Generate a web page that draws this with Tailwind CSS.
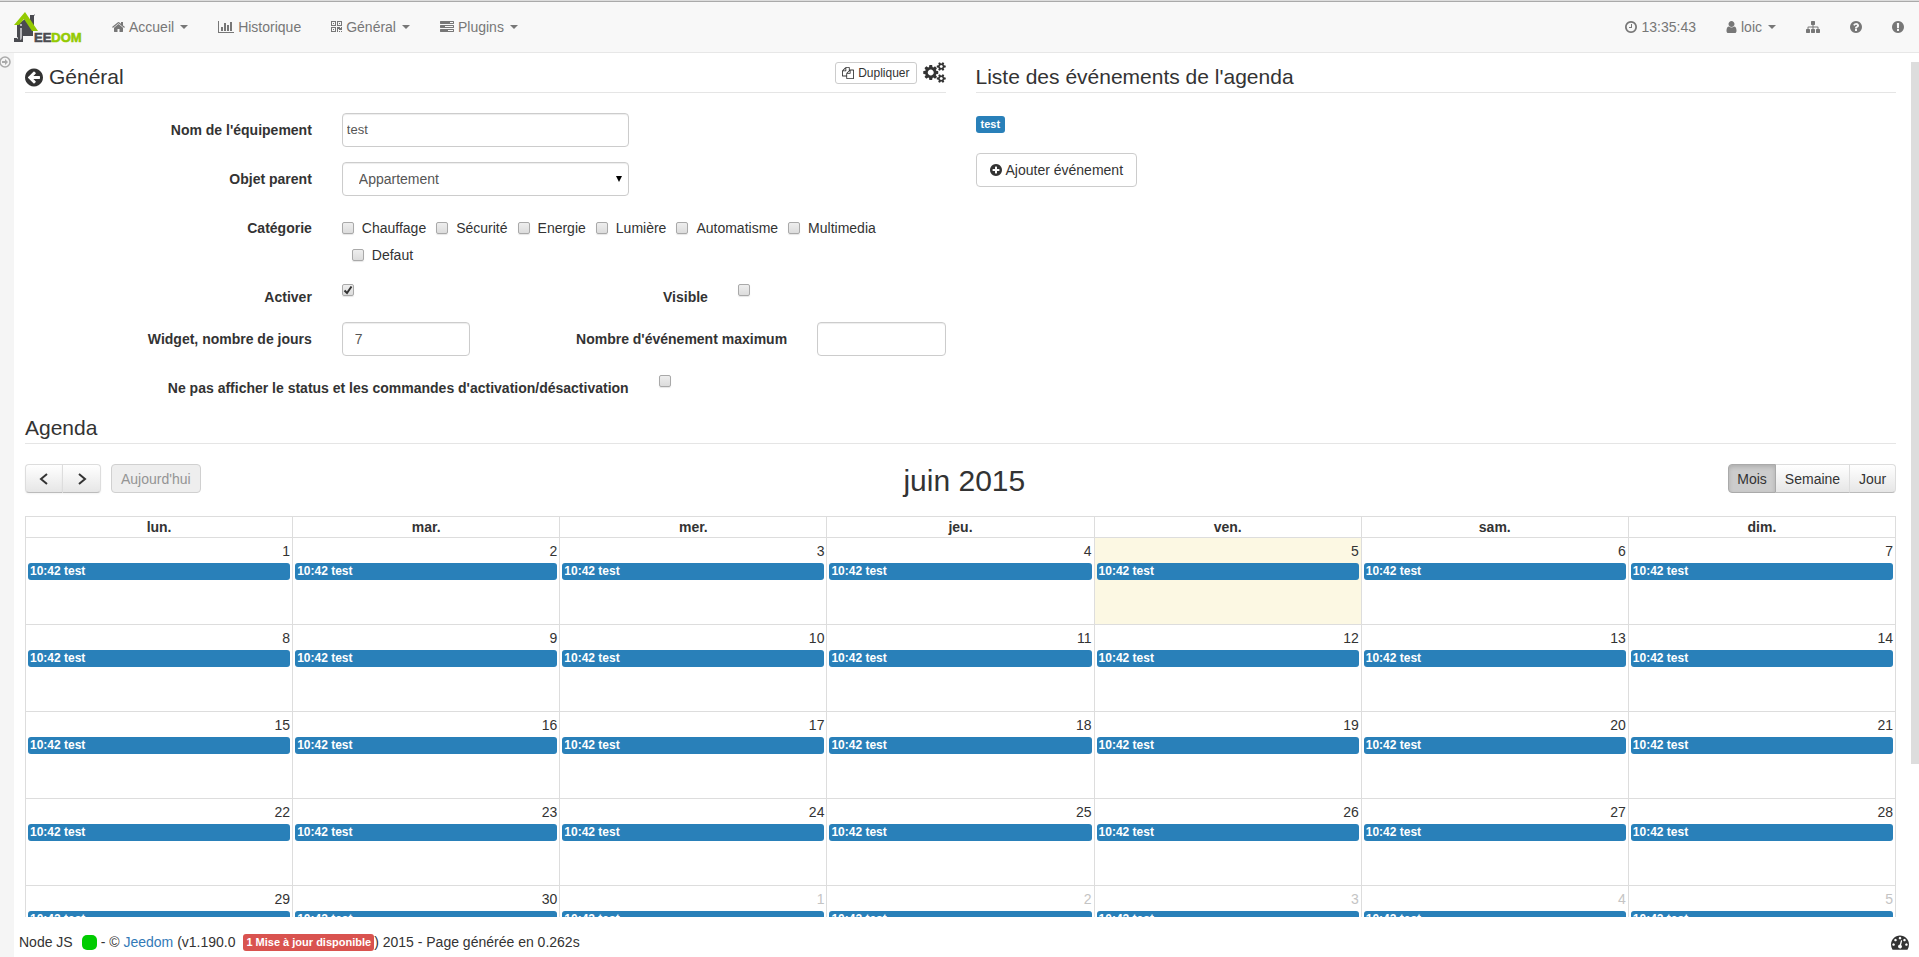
<!DOCTYPE html>
<html lang="fr">
<head>
<meta charset="utf-8">
<title>Jeedom - Agenda</title>
<script src="https://cdn.jsdelivr.net/npm/@tailwindcss/browser@4"></script>
</head>
<body class="h-screen overflow-hidden flex flex-col bg-white text-sm leading-5 text-[#333] font-['Liberation_Sans',Arial,sans-serif]">

<!-- Shared icon shapes -->
<svg class="hidden" aria-hidden="true">
  <symbol id="caret" viewBox="0 0 8 4"><path d="M0 0h8L4 4z"/></symbol>
  <symbol id="home" viewBox="64 0 1664 1792"><path d="M1472 992v480q0 26-19 45t-45 19h-384v-384h-256v384h-384q-26 0-45-19t-19-45v-480q0-1 .5-3t.5-3l575-474 575 474q1 2 1 6zm223-69l-62 74q-8 9-21 11h-3q-13 0-21-7l-692-577-692 577q-12 8-24 7-13-2-21-11l-62-74q-8-10-7-23.5t11-21.5l719-599q32-26 76-26t76 26l244 204v-195q0-14 9-23t23-9h192q14 0 23 9t9 23v408l219 182q10 8 11 21.5t-7 23.5z"/></symbol>
  <symbol id="chart" viewBox="0 0 2048 1792"><path d="M640 896v512h-256v-512h256zm384-512v1024h-256v-1024h256zm1024 1152v128h-2048v-1536h128v1408h1920zm-640-896v768h-256v-768h256zm384-384v1152h-256v-1152h256z"/></symbol>
  <symbol id="qrcode" viewBox="192 0 1408 1792"><path d="M576 1152v128h-128v-128h128zm0-768v128h-128v-128h128zm768 0v128h-128v-128h128zm-1024 1023h384v-383h-384v383zm0-767h384v-384h-384v384zm768 0h384v-384h-384v384zm-256 256v640h-640v-640h640zm512 512v128h-128v-128h128zm256 0v128h-128v-128h128zm0-512v384h-384v-128h-128v384h-128v-640h384v128h128v-128h128zm-768-768v640h-640v-640h640zm768 0v640h-640v-640h640z"/></symbol>
  <symbol id="tasks" viewBox="0 0 1792 1792"><path d="M1024 1408h640v-128h-640v128zm-384-512h1024v-128h-1024v128zm640-512h384v-128h-384v128zm512 832v256q0 26-19 45t-45 19h-1664q-26 0-45-19t-19-45v-256q0-26 19-45t45-19h1664q26 0 45 19t19 45zm0-512v256q0 26-19 45t-45 19h-1664q-26 0-45-19t-19-45v-256q0-26 19-45t45-19h1664q26 0 45 19t19 45zm0-512v256q0 26-19 45t-45 19h-1664q-26 0-45-19t-19-45v-256q0-26 19-45t45-19h1664q26 0 45 19t19 45z"/></symbol>
  <symbol id="clock" viewBox="128 0 1536 1792"><path d="M1024 544v448q0 14-9 23t-23 9h-320q-14 0-23-9t-9-23v-64q0-14 9-23t23-9h224v-352q0-14 9-23t23-9h64q14 0 23 9t9 23zm416 352q0-148-73-273t-198-198-273-73-273 73-198 198-73 273 73 273 198 198 273 73 273-73 198-198 73-273zm224 0q0 209-103 385.5t-279.5 279.5-385.5 103-385.5-103-279.5-279.5-103-385.5 103-385.5 279.5-279.5 385.5-103 385.5 103 279.5 279.5 103 385.5z"/></symbol>
  <symbol id="user" viewBox="256 0 1280 1792"><path d="M1536 1399q0 109-62.5 187t-150.5 78h-854q-88 0-150.5-78t-62.5-187q0-85 8.5-160.5t31.5-152 58.5-131 94-89 134.5-34.5q131 128 313 128t313-128q76 0 134.5 34.5t94 89 58.5 131 31.5 152 8.5 160.5zm-256-887q0 159-112.5 271.5t-271.5 112.5-271.5-112.5-112.5-271.5 112.5-271.5 271.5-112.5 271.5 112.5 112.5 271.5z"/></symbol>
  <symbol id="sitemap" viewBox="0 0 1792 1792"><path d="M1792 1248v320q0 40-28 68t-68 28h-320q-40 0-68-28t-28-68v-320q0-40 28-68t68-28h96v-192h-512v192h96q40 0 68 28t28 68v320q0 40-28 68t-68 28h-320q-40 0-68-28t-28-68v-320q0-40 28-68t68-28h96v-192h-512v192h96q40 0 68 28t28 68v320q0 40-28 68t-68 28h-320q-40 0-68-28t-28-68v-320q0-40 28-68t68-28h96v-192q0-52 38-90t90-38h512v-192h-96q-40 0-68-28t-28-68v-320q0-40 28-68t68-28h320q40 0 68 28t28 68v320q0 40-28 68t-68 28h-96v192h512q52 0 90 38t38 90v192h96q40 0 68 28t28 68z"/></symbol>
  <symbol id="question" viewBox="128 0 1536 1792"><path d="M1024 1376v-192q0-14-9-23t-23-9h-192q-14 0-23 9t-9 23v192q0 14 9 23t23 9h192q14 0 23-9t9-23zm256-672q0-88-55.5-163t-138.5-116-170-41q-243 0-371 213-15 24 8 42l132 100q7 6 19 6 16 0 25-12 53-68 86-92 34-24 86-24 48 0 85.5 26t37.5 59q0 38-20 61t-68 45q-63 28-115.5 86.5t-52.5 125.5v36q0 14 9 23t23 9h192q14 0 23-9t9-23q0-19 21.5-49.5t54.5-49.5q32-18 49-28.5t46-35 44.5-48 28-60.5 12.5-81zm384 192q0 209-103 385.5t-279.5 279.5-385.5 103-385.5-103-279.5-279.5-103-385.5 103-385.5 279.5-279.5 385.5-103 385.5 103 279.5 279.5 103 385.5z"/></symbol>
  <symbol id="exclamation" viewBox="128 0 1536 1792"><path d="M896 128q209 0 385.5 103t279.5 279.5 103 385.5-103 385.5-279.5 279.5-385.5 103-385.5-103-279.5-279.5-103-385.5 103-385.5 279.5-279.5 385.5-103zm128 1247v-190q0-14-9-23.5t-22-9.5h-192q-13 0-23 10t-10 23v190q0 13 10 23t23 10h192q13 0 22-9.5t9-23.5zm-2-344l18-621q0-12-10-18-10-8-24-8h-220q-14 0-24 8-10 6-10 18l17 621q0 10 10 17.5t24 7.5h185q14 0 23.5-7.5t10.5-17.5z"/></symbol>
  <symbol id="back" viewBox="128 0 1536 1792"><path d="M1408 960v-128q0-26-19-45t-45-19h-502l189-189q19-19 19-45t-19-45l-91-91q-18-18-45-18t-45 18l-362 362-91 91q-18 18-18 45t18 45l91 91 362 362q18 18 45 18t45-18l91-91q18-18 18-45t-18-45l-189-189h502q26 0 45-19t19-45zm256-64q0 209-103 385.5t-279.5 279.5-385.5 103-385.5-103-279.5-279.5-103-385.5 103-385.5 279.5-279.5 385.5-103 385.5 103 279.5 279.5 103 385.5z"/></symbol>
  <symbol id="plus" viewBox="128 0 1536 1792"><path d="M1344 960v-128q0-26-19-45t-45-19h-256v-256q0-26-19-45t-45-19h-128q-26 0-45 19t-19 45v256h-256q-26 0-45 19t-19 45v128q0 26 19 45t45 19h256v256q0 26 19 45t45 19h128q26 0 45-19t19-45v-256h256q26 0 45-19t19-45zm320-64q0 209-103 385.5t-279.5 279.5-385.5 103-385.5-103-279.5-279.5-103-385.5 103-385.5 279.5-279.5 385.5-103 385.5 103 279.5 279.5 103 385.5z"/></symbol>
  <symbol id="files" viewBox="0 0 1792 1792"><path d="M1696 384q40 0 68 28t28 68v1216q0 40-28 68t-68 28h-960q-40 0-68-28t-28-68v-288h-544q-40 0-68-28t-28-68v-672q0-40 20-88t48-76l408-408q28-28 76-48t88-20h416q40 0 68 28t28 68v328q68-40 128-40h416zm-544 213l-299 299h299v-299zm-640-384l-299 299h299v-299zm196 647l316-316v-416h-384v416q0 40-28 68t-68 28h-416v640h512v-256q0-40 20-88t48-76zm956 804v-1152h-384v416q0 40-28 68t-68 28h-416v640h896z"/></symbol>
  <symbol id="cogs" viewBox="0 0 1920 1792"><path d="M896 896q0-106-75-181t-181-75-181 75-75 181 75 181 181 75 181-75 75-181zm768 512q0-52-38-90t-90-38-90 38-38 90q0 53 37.5 90.5t90.5 37.5 90.5-37.5 37.5-90.5zm0-1024q0-52-38-90t-90-38-90 38-38 90q0 53 37.5 90.5t90.5 37.5 90.5-37.5 37.5-90.5zm-384 421v185q0 10-7 19.5t-16 10.5l-155 24q-11 35-32 76 34 48 90 115 7 11 7 20 0 12-7 19-23 30-82.5 89.5t-78.5 59.5q-11 0-21-7l-115-90q-37 19-77 31-11 108-23 155-7 24-30 24h-186q-11 0-20-7.5t-10-17.5l-23-153q-34-10-75-31l-118 89q-7 7-20 7-11 0-21-8-144-133-144-160 0-9 7-19 10-14 41-53t47-61q-23-44-35-82l-152-24q-10-1-17-9.5t-7-19.5v-185q0-10 7-19.5t16-10.5l155-24q11-35 32-76-34-48-90-115-7-11-7-20 0-12 7-20 22-30 82-89t79-59q11 0 21 7l115 90q34-18 77-32 11-108 23-154 7-24 30-24h186q11 0 20 7.5t10 17.5l23 153q34 10 75 31l118-89q8-7 20-7 11 0 21 8 144 133 144 160 0 8-7 19-12 16-42 54t-45 60q23 48 34 82l152 23q10 2 17 10.5t7 19.5zm640 533v140q0 16-149 31-12 27-30 52 51 113 51 138 0 4-4 7-122 71-124 71-8 0-46-47t-52-68q-20 2-30 2t-30-2q-14 21-52 68t-46 47q-2 0-124-71-4-3-4-7 0-25 51-138-18-25-30-52-149-15-149-31v-140q0-16 149-31 13-29 30-52-51-113-51-138 0-4 4-7 4-2 35-20t59-34 30-16q8 0 46 46.5t52 67.5q20-2 30-2t30 2q51-71 92-112l6-2q4 0 124 70 4 3 4 7 0 25-51 138 17 23 30 52 149 15 149 31zm0-1024v140q0 16-149 31-12 27-30 52 51 113 51 138 0 4-4 7-122 71-124 71-8 0-46-47t-52-68q-20 2-30 2t-30-2q-14 21-52 68t-46 47q-2 0-124-71-4-3-4-7 0-25 51-138-18-25-30-52-149-15-149-31v-140q0-16 149-31 13-29 30-52-51-113-51-138 0-4 4-7 4-2 35-20t59-34 30-16q8 0 46 46.5t52 67.5q20-2 30-2t30 2q51-71 92-112l6-2q4 0 124 70 4 3 4 7 0 25-51 138 17 23 30 52 149 15 149 31z"/></symbol>
  <symbol id="gauge" viewBox="0 0 1792 1792"><path d="M384 1152q0-53-37.5-90.5t-90.5-37.5-90.5 37.5-37.5 90.5 37.5 90.5 90.5 37.5 90.5-37.5 37.5-90.5zm192-448q0-53-37.5-90.5t-90.5-37.5-90.5 37.5-37.5 90.5 37.5 90.5 90.5 37.5 90.5-37.5 37.5-90.5zm428 481l101-382q6-26-7.5-48.5t-38.5-29.5-48 6.5-30 39.5l-101 382q-60 5-107 43.5t-63 98.5q-20 77 20 146t117 89 146-20 89-117q16-60-6-117t-72-91zm660-33q0-53-37.5-90.5t-90.5-37.5-90.5 37.5-37.5 90.5 37.5 90.5 90.5 37.5 90.5-37.5 37.5-90.5zm-640-640q0-53-37.5-90.5t-90.5-37.5-90.5 37.5-37.5 90.5 37.5 90.5 90.5 37.5 90.5-37.5 37.5-90.5zm448 192q0-53-37.5-90.5t-90.5-37.5-90.5 37.5-37.5 90.5 37.5 90.5 90.5 37.5 90.5-37.5 37.5-90.5zm320 448q0 261-141 483-19 29-54 29h-1402q-35 0-54-29-141-221-141-483 0-182 71-348t191-286 286-191 348-71 348 71 286 191 191 286 71 348z"/></symbol>
</svg>

<header class="shrink-0 border-t border-[#ddd]">
  <nav class="flex h-[52px] items-center border-t border-b border-t-[#aaa] border-b-[#e7e7e7] bg-[#f8f8f8] text-[#777]">
    <a href="#" class="ml-[13px] mr-[14px]" aria-label="Jeedom">
      <svg class="h-[34px] w-[70px]" viewBox="0 0 70 34">
        <path d="M17 5h4v12l-4-6z" fill="#4a4b50"/>
        <path d="M21 4h1v2h-1z" fill="#b5b5b8"/>
        <path d="M4 15l8-6 8 11v6H10v6H1v-4h3z" fill="#4a4b50"/>
        <path d="M4 27h1v2H4zM7 14h2v2H7zM7 18h2v9q0 3-2 3z" fill="#b5b5b8"/>
        <path d="M1 15L12 2l13 19h-6L11 9l-5 6z" fill="#94ca02"/>
        <text x="21" y="32" font-family="Liberation Sans, Arial, sans-serif" font-size="13" font-weight="700" fill="#4a4b50" stroke="#4a4b50" stroke-width=".6">EE<tspan fill="#94ca02" stroke="#94ca02">DOM</tspan></text>
      </svg>
    </a>
    <a href="#" class="flex items-center px-[15px]"><svg class="mr-1 h-[14px] w-[13px] fill-current"><use href="#home"/></svg>Accueil<svg class="ml-[6px] h-1 w-2 fill-current"><use href="#caret"/></svg></a>
    <a href="#" class="flex items-center px-[15px]"><svg class="mr-1 h-[14px] w-4 fill-current"><use href="#chart"/></svg>Historique</a>
    <a href="#" class="flex items-center px-[15px]"><svg class="mr-1 h-[14px] w-[11px] fill-current"><use href="#qrcode"/></svg>Général<svg class="ml-[6px] h-1 w-2 fill-current"><use href="#caret"/></svg></a>
    <a href="#" class="flex items-center px-[15px]"><svg class="mr-1 h-[14px] w-[14px] fill-current"><use href="#tasks"/></svg>Plugins<svg class="ml-[6px] h-1 w-2 fill-current"><use href="#caret"/></svg></a>
    <span class="ml-auto flex items-center px-[15px]"><svg class="mr-1 h-[14px] w-3 fill-current"><use href="#clock"/></svg>13:35:43</span>
    <a href="#" class="flex items-center px-[15px]"><svg class="mr-1 h-[14px] w-[11px] fill-current"><use href="#user"/></svg>loic<svg class="ml-[6px] h-1 w-2 fill-current"><use href="#caret"/></svg></a>
    <a href="#" class="px-[15px]" aria-label="Plan"><svg class="h-[14px] w-[14px] fill-current"><use href="#sitemap"/></svg></a>
    <a href="#" class="px-[15px]" aria-label="Aide"><svg class="h-[14px] w-3 fill-current"><use href="#question"/></svg></a>
    <a href="#" class="px-[15px]" aria-label="Alerte"><svg class="h-[14px] w-3 fill-current"><use href="#exclamation"/></svg></a>
  </nav>
</header>

<div class="relative flex min-h-0 flex-1">
  <aside class="w-[14px] shrink-0 overflow-hidden bg-[#f5f5f5]">
    <button type="button" class="block pt-[3px]" aria-label="Ouvrir le menu">
      <svg class="h-3 w-[11px]" viewBox="1 0 11 12" fill="none" stroke="#aaa"><circle cx="6" cy="6" r="5" stroke-width="1.5"/><path d="M3 5h3V3l3 3-3 3V7H3z" fill="#aaa" stroke="none"/></svg>
    </button>
  </aside>

  <div class="flex min-w-0 flex-1 flex-col">
    <main class="min-h-0 flex-1 overflow-hidden pl-[11px] pr-[23px] pt-[9px]">
      <div class="flex gap-[30px]">
        <section class="min-w-0 flex-1">
          <div class="mb-5 flex h-[31px] items-start border-b border-[#e5e5e5]">
            <h1 class="flex items-center text-[21px] leading-[30px]"><svg class="mr-[6px] h-[21px] w-[18px] fill-current"><use href="#back"/></svg>Général</h1>
            <button type="button" class="ml-auto flex h-[22px] items-center rounded-[3px] border border-[#ccc] bg-white px-[6px] text-xs"><svg class="mr-1 h-3 w-3 fill-current"><use href="#files"/></svg>Dupliquer</button>
            <button type="button" class="ml-[6px]" aria-label="Configuration"><svg class="h-[21px] w-[23px] fill-current"><use href="#cogs"/></svg></button>
          </div>

          <form class="-mx-[15px] grid grid-cols-12 items-start gap-y-[15px]">
            <label for="nom" class="col-span-4 px-[15px] pt-[7px] text-right font-bold">Nom de l'équipement</label>
            <div class="col-span-4 px-[15px]"><input id="nom" type="text" value="test" class="h-[34px] w-full rounded border border-[#ccc] px-1 pb-[2px] text-[13px] text-[#555] shadow-[inset_0_1px_1px_rgba(0,0,0,0.075)]"></div>

            <label for="parent" class="col-span-4 col-start-1 px-[15px] pt-[7px] text-right font-bold">Objet parent</label>
            <div class="relative col-span-4 px-[15px]">
              <select id="parent" class="h-[34px] w-full appearance-none rounded border border-[#ccc] bg-white px-4 text-[#555] shadow-[inset_0_1px_1px_rgba(0,0,0,0.075)]"><option>Appartement</option></select>
              <svg class="pointer-events-none absolute right-[22px] top-[14px] h-[6px] w-[6px]" viewBox="0 0 6 6"><path d="M0 0h6L3 6z"/></svg>
            </div>

            <span id="cat" class="col-span-4 col-start-1 px-[15px] pt-[7px] text-right font-bold">Catégorie</span>
            <div role="group" aria-labelledby="cat" id="categories" class="col-span-8 flex flex-wrap pl-[15px] pr-[30px]"></div>

            <label for="activer" class="col-span-4 col-start-1 px-[15px] pt-[7px] text-right font-bold">Activer</label>
            <div class="col-span-1 pl-[15px] pt-1"><span class="grid h-3 w-3"><input id="activer" type="checkbox" checked class="peer col-start-1 row-start-1 h-3 w-3 appearance-none rounded-[2px] border border-[#a9a9a9] bg-linear-to-b from-[#eee] to-[#dcdcdc] shadow-[0_1px_1px_rgba(0,0,0,0.1)]"><svg class="pointer-events-none invisible col-start-1 row-start-1 h-3 w-3 peer-checked:visible" viewBox="0 0 12 12" fill="none" stroke="#333" stroke-width="2"><path d="M2.500 6.500l2.500 2.500 4.500-6.500"/></svg></span></div>
            <label for="visible" class="col-span-4 px-[15px] pt-[7px] text-right font-bold">Visible</label>
            <div class="col-span-3 pl-[15px] pt-1"><input id="visible" type="checkbox" class="block h-3 w-3 appearance-none rounded-[2px] border border-[#a9a9a9] bg-linear-to-b from-[#eee] to-[#dcdcdc] shadow-[0_1px_1px_rgba(0,0,0,0.1)]"></div>

            <label for="jours" class="col-span-4 px-[15px] pt-[7px] text-right font-bold">Widget, nombre de jours</label>
            <div class="col-span-2 px-[15px]"><input id="jours" type="text" value="7" class="h-[34px] w-full rounded border border-[#ccc] px-3 text-[#555] shadow-[inset_0_1px_1px_rgba(0,0,0,0.075)]"></div>
            <label for="max" class="col-span-4 px-[15px] pt-[7px] text-right font-bold">Nombre d'événement maximum</label>
            <div class="col-span-2 px-[15px]"><input id="max" type="text" class="h-[34px] w-full rounded border border-[#ccc] px-3 text-[#555] shadow-[inset_0_1px_1px_rgba(0,0,0,0.075)]"></div>

            <label for="status" class="col-span-8 px-[15px] pt-[7px] text-right font-bold">Ne pas afficher le status et les commandes d'activation/désactivation</label>
            <div class="col-span-4 pl-[15px] pt-1"><input id="status" type="checkbox" class="block h-3 w-3 appearance-none rounded-[2px] border border-[#a9a9a9] bg-linear-to-b from-[#eee] to-[#dcdcdc] shadow-[0_1px_1px_rgba(0,0,0,0.1)]"></div>
          </form>
        </section>

        <section class="min-w-0 flex-1">
          <h2 class="mb-[23px] border-b border-[#e5e5e5] text-[21px] leading-[30px]">Liste des événements de l'agenda</h2>
          <a href="#" class="block h-[17px] w-fit rounded-[3px] bg-[#2980b9] px-[5px] text-[11px] leading-4 font-bold text-white">test</a>
          <button type="button" class="mt-5 flex h-[34px] items-center rounded border border-[#ccc] bg-white px-[13px]"><svg class="mr-1 h-[14px] w-3 fill-current"><use href="#plus"/></svg>Ajouter événement</button>
        </section>
      </div>

      <section>
        <h2 class="mt-[15px] mb-5 border-b border-[#e5e5e5] text-[21px] leading-[30px]">Agenda</h2>
        <div class="mb-[19px] flex items-start justify-between">
          <div class="flex">
            <button type="button" aria-label="Précédent" class="flex h-[29px] w-[37px] items-center justify-center rounded-l border border-r-0 border-[#ddd] border-b-[#bbb] bg-linear-to-b from-white to-[#e6e6e6] shadow-[0_1px_2px_rgba(0,0,0,0.05)]"><svg class="h-3 w-3" viewBox="0 0 12 12" fill="none" stroke="#333" stroke-width="2"><path d="M9 1L3 6l6 5"/></svg></button>
            <button type="button" aria-label="Suivant" class="mr-[10px] flex h-[29px] w-[39px] items-center justify-center rounded-r border border-[#ddd] border-b-[#bbb] bg-linear-to-b from-white to-[#e6e6e6] shadow-[0_1px_2px_rgba(0,0,0,0.05)]"><svg class="h-3 w-3" viewBox="0 0 12 12" fill="none" stroke="#333" stroke-width="2"><path d="M3 1l6 5-6 5"/></svg></button>
            <button type="button" disabled class="h-[29px] rounded border border-[#d0d0d0] bg-[#eee] px-[9px] text-[#949494]">Aujourd'hui</button>
          </div>
          <h2 class="text-[30px] leading-[33px]">juin 2015</h2>
          <div class="flex">
            <button type="button" class="h-[29px] w-12 rounded-l border border-[#aaa] bg-[#ccc] shadow-[inset_0_2px_4px_rgba(0,0,0,0.15)]">Mois</button>
            <button type="button" class="h-[29px] w-[74px] border-y border-r border-[#ddd] border-b-[#bbb] bg-linear-to-b from-white to-[#e6e6e6]">Semaine</button>
            <button type="button" class="h-[29px] w-[46px] rounded-r border-y border-r border-[#ddd] border-b-[#bbb] bg-linear-to-b from-white to-[#e6e6e6]">Jour</button>
          </div>
        </div>

        <table class="w-full table-fixed border-collapse">
          <thead>
            <tr class="h-[21px]">
              <th class="border border-[#ddd] p-0">lun.</th><th class="border border-[#ddd] p-0">mar.</th><th class="border border-[#ddd] p-0">mer.</th><th class="border border-[#ddd] p-0">jeu.</th><th class="border border-[#ddd] p-0">ven.</th><th class="border border-[#ddd] p-0">sam.</th><th class="border border-[#ddd] p-0">dim.</th>
            </tr>
          </thead>
          <tbody id="month"></tbody>
        </table>
      </section>
    </main>

    <footer class="flex h-10 shrink-0 items-center pl-[5px] pr-[10px] pt-[10px]">
      <span>Node JS</span>
      <span class="ml-[9px] mr-1 h-[15px] w-[15px] rounded-[5px] bg-[#00cc00]"></span>
      <span class="whitespace-pre">- © <a href="#" class="text-[#337ab7]">Jeedom</a> (v1.190.0 </span>
      <a href="#" class="ml-1 h-[17px] rounded-[3px] bg-[#d9534f] px-[3px] text-[11px] leading-[17px] font-bold text-white">1 Mise à jour disponible</a>
      <span>) 2015 - Page générée en 0.262s</span>
      <button type="button" class="ml-auto" aria-label="Tableau de bord"><svg class="h-[18px] w-[18px] fill-current"><use href="#gauge"/></svg></button>
    </footer>
  </div>

  <div class="absolute right-0 top-[9px] h-[702px] w-2 bg-[#ddd]"></div>
</div>

<script>
  // Category tick boxes
  document.getElementById('categories').innerHTML =
    ['Chauffage', 'Sécurité', 'Energie', 'Lumière', 'Automatisme', 'Multimedia', 'Defaut'].map((name, i) => `
      <label class="${i ? 'ml-[10px] flex items-center pt-[7px]' : 'flex items-center pt-[7px]'}">
        <input type="checkbox" class="mr-2 h-3 w-3 appearance-none rounded-[2px] border border-[#a9a9a9] bg-linear-to-b from-[#eee] to-[#dcdcdc] shadow-[0_1px_1px_rgba(0,0,0,0.1)]">${name}
      </label>`).join('');

  // Five weeks of June 2015, which starts on a Monday
  const today = 5, daysInMonth = 30;
  let rows = '';
  for (let week = 0; week < 5; week++) {
    rows += '<tr class="h-[87px]">';
    for (let d = 1; d <= 7; d++) {
      const n = week * 7 + d, next = n > daysInMonth;
      rows += `<td class="${n === today ? 'border border-[#ddd] bg-[#fcf8e3] p-0 align-top' : 'border border-[#ddd] p-0 align-top'}">
        <div class="${next ? 'pt-[3px] pr-[2px] pb-[2px] text-right text-[#c4c4c4]' : 'pt-[3px] pr-[2px] pb-[2px] text-right'}">${next ? n - daysInMonth : n}</div>
        <a href="#" class="mx-[2px] block h-[17px] rounded-[3px] bg-[#2980b9] px-[2px] text-xs leading-4 font-bold text-white">10:42 test</a>
      </td>`;
    }
    rows += '</tr>';
  }
  document.getElementById('month').innerHTML = rows;
</script>
</body>
</html>
